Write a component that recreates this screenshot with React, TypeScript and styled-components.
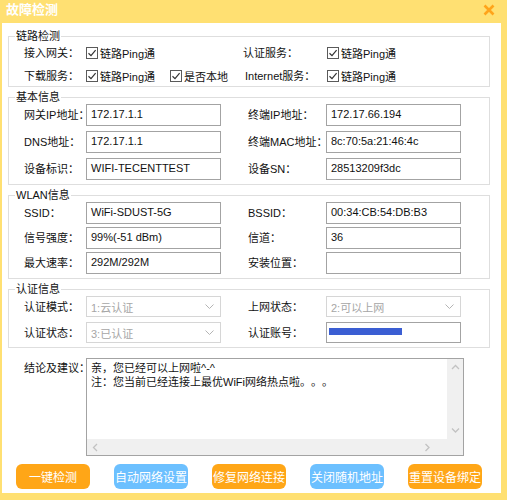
import { FC } from "react";
import styled, { createGlobalStyle } from "styled-components";

const GlobalStyle = createGlobalStyle`
  html, body {
    margin: 0;
    padding: 0;
    background: #ffe072;
  }
  body {
    font-family: "Liberation Sans", "Noto Sans CJK SC", sans-serif;
    font-size: 11px;
    color: #111;
    text-spacing-trim: space-all;
  }
`;

const CheckIcon: FC = () => (
  <svg width="12" height="12" viewBox="0 0 12 12">
    <rect x="0.5" y="0.5" width="11" height="11" fill="#fff" stroke="#5a5a5a" />
    <path d="M2.5 6.2 L5 8.6 L9.6 3.2" fill="none" stroke="#333" strokeWidth="1.2" />
  </svg>
);

const ChevronDown: FC = () => (
  <svg width="9" height="5" viewBox="0 0 9 5">
    <path d="M0.5 0.5 L4.5 4.5 L8.5 0.5" fill="none" stroke="#b4b4b4" strokeWidth="1" />
  </svg>
);

const Arrow: FC<{ dir: "up" | "down" | "left" | "right" }> = ({ dir }) => {
  const d = {
    up: "M1 5 L4.5 1.5 L8 5",
    down: "M1 1.5 L4.5 5 L8 1.5",
    left: "M5 1 L1.5 4.5 L5 8",
    right: "M1.5 1 L5 4.5 L1.5 8",
  }[dir];
  const vertical = dir === "up" || dir === "down";
  return (
    <svg
      width={vertical ? 9 : 7}
      height={vertical ? 7 : 9}
      viewBox={vertical ? "0 0 9 7" : "0 0 7 9"}
    >
      <path d={d} fill="none" stroke="#c2c2c2" strokeWidth="1.3" />
    </svg>
  );
};

type Pair = { label: string; value: string };

const basicInfo: Pair[][] = [
  [
    { label: "网关IP地址：", value: "172.17.1.1" },
    { label: "终端IP地址：", value: "172.17.66.194" },
  ],
  [
    { label: "DNS地址：", value: "172.17.1.1" },
    { label: "终端MAC地址：", value: "8c:70:5a:21:46:4c" },
  ],
  [
    { label: "设备标识：", value: "WIFI-TECENTTEST" },
    { label: "设备SN：", value: "28513209f3dc" },
  ],
];

const wlanInfo: Pair[][] = [
  [
    { label: "SSID：", value: "WiFi-SDUST-5G" },
    { label: "BSSID：", value: "00:34:CB:54:DB:B3" },
  ],
  [
    { label: "信号强度：", value: "99%(-51 dBm)" },
    { label: "信道：", value: "36" },
  ],
  [
    { label: "最大速率：", value: "292M/292M" },
    { label: "安装位置：", value: "" },
  ],
];

const buttons = [
  { text: "一键检测", tone: "orange" },
  { text: "自动网络设置", tone: "blue" },
  { text: "修复网络连接", tone: "orange" },
  { text: "关闭随机地址", tone: "blue" },
  { text: "重置设备绑定", tone: "orange" },
] as const;

const App: FC = () => (
  <>
    <GlobalStyle />
    <Window>
      <TitleBar>
        <Title>故障检测</Title>
        <CloseButton>
          <svg width="12" height="12" viewBox="0 0 12 12">
            <path d="M1.5 1.5 L10.5 10.5 M10.5 1.5 L1.5 10.5" stroke="#ffa41a" strokeWidth="2.6" />
          </svg>
        </CloseButton>
      </TitleBar>
      <Panel>
        <Group>
          <Legend>链路检测</Legend>
          <CheckGrid>
            <Label>接入网关：</Label>
            <Checks>
              <CheckItem>
                <CheckIcon />
                链路Ping通
              </CheckItem>
            </Checks>
            <Label>认证服务：</Label>
            <Checks>
              <CheckItem>
                <CheckIcon />
                链路Ping通
              </CheckItem>
            </Checks>
            <Label>下载服务：</Label>
            <Checks>
              <CheckItem>
                <CheckIcon />
                链路Ping通
              </CheckItem>
              <CheckItem>
                <CheckIcon />
                是否本地
              </CheckItem>
            </Checks>
            <Label $shift={2}>Internet服务：</Label>
            <Checks>
              <CheckItem>
                <CheckIcon />
                链路Ping通
              </CheckItem>
            </Checks>
          </CheckGrid>
        </Group>

        <Group>
          <Legend>基本信息</Legend>
          <InfoGrid $rowHeight={22} $rowGap={5}>
            {basicInfo.map((row, i) => (
              <InfoRow key={i} row={row} />
            ))}
          </InfoGrid>
        </Group>

        <Group>
          <Legend>WLAN信息</Legend>
          <InfoGrid $rowHeight={22} $rowGap={3}>
            {wlanInfo.map((row, i) => (
              <InfoRow key={i} row={row} />
            ))}
          </InfoGrid>
        </Group>

        <Group>
          <Legend>认证信息</Legend>
          <InfoGrid $rowHeight={21} $rowGap={5}>
            <Label>认证模式：</Label>
            <Select>
              1:云认证
              <ChevronDown />
            </Select>
            <span />
            <Label>上网状态：</Label>
            <Select>
              2:可以上网
              <ChevronDown />
            </Select>
            <Label>认证状态：</Label>
            <Select>
              3:已认证
              <ChevronDown />
            </Select>
            <span />
            <Label>认证账号：</Label>
            <Field>
              <Masked />
            </Field>
          </InfoGrid>
        </Group>

        <Conclusion>
          <MemoLabel>结论及建议：</MemoLabel>
          <MemoBox>
            <MemoText>
              亲，您已经可以上网啦^-^
              <br />
              注：您当前已经连接上最优WiFi网络热点啦。。。
            </MemoText>
            <VScroll>
              <Arrow dir="up" />
              <Arrow dir="down" />
            </VScroll>
            <HScroll>
              <Arrow dir="left" />
              <Arrow dir="right" />
            </HScroll>
            <Corner />
          </MemoBox>
        </Conclusion>

        <ButtonRow>
          {buttons.map((b) => (
            <ActionButton key={b.text} $tone={b.tone}>
              {b.text}
            </ActionButton>
          ))}
        </ButtonRow>
      </Panel>
    </Window>
  </>
);

const InfoRow: FC<{ row: Pair[] }> = ({ row }) => (
  <>
    <Label>{row[0].label}</Label>
    <Field>{row[0].value}</Field>
    <span />
    <Label>{row[1].label}</Label>
    <Field>{row[1].value}</Field>
  </>
);

export default App;

const Window = styled.div`
  width: 507px;
  height: 500px;
  background: #ffe072;
  display: flex;
  flex-direction: column;
`;

const TitleBar = styled.div`
  height: 23px;
  display: flex;
  justify-content: space-between;
  align-items: flex-start;
  padding: 2px 12px 0 6px;
  box-sizing: border-box;
`;

const Title = styled.div`
  color: #fff;
  font-size: 13px;
  font-weight: bold;
  line-height: 16px;
`;

const CloseButton = styled.div`
  padding-top: 2px;
  line-height: 0;
`;

const Panel = styled.div`
  background: #fff;
  margin: 0 6px 7px 2px;
  height: 470px;
  box-sizing: border-box;
  padding: 6px 11px 4px 6px;
  display: flex;
  flex-direction: column;
  gap: 3px;
`;

const Group = styled.fieldset`
  margin: 0;
  padding: 0 0 4px 6px;
  border: 1px solid #dedede;
  min-width: 0;
  &:first-child {
    padding-bottom: 0;
  }
`;

const Legend = styled.legend`
  padding: 0 1px;
  font-size: 11px;
  line-height: 14px;
  color: #111;
`;

const CheckGrid = styled.div`
  display: grid;
  grid-template-columns: 62px 157px 84px 1fr;
  grid-auto-rows: 20px;
  row-gap: 3px;
  align-items: center;
  padding-left: 9px;
`;

const Label = styled.span<{ $shift?: number }>`
  white-space: nowrap;
  line-height: 14px;
  padding-left: ${(p) => p.$shift ?? 0}px;
`;

const Checks = styled.div`
  display: flex;
  gap: 15px;
  align-items: center;
`;

const CheckItem = styled.span`
  display: inline-flex;
  align-items: center;
  gap: 2px;
  white-space: nowrap;
  svg {
    flex: none;
  }
`;

const InfoGrid = styled.div<{ $rowHeight: number; $rowGap: number }>`
  display: grid;
  grid-template-columns: 62px 135px 27px 78px 135px;
  grid-auto-rows: ${(p) => p.$rowHeight}px;
  row-gap: ${(p) => p.$rowGap}px;
  align-items: center;
  padding-left: 9px;
`;

const Field = styled.div`
  height: 100%;
  box-sizing: border-box;
  border: 1px solid #a3a3a3;
  padding: 3px 4px 0;
  line-height: 13px;
  white-space: nowrap;
  overflow: hidden;
`;

const Masked = styled.span`
  display: block;
  width: 73px;
  height: 7px;
  margin: 2px 0 0 -2px;
  background: #3b5ed3;
`;

const Select = styled.div`
  height: 100%;
  box-sizing: border-box;
  border: 1px solid #d6d6d6;
  padding: 0 6px 0 4px;
  color: #a6a6a6;
  display: flex;
  align-items: center;
  justify-content: space-between;
  white-space: nowrap;
`;

const Conclusion = styled.div`
  display: grid;
  grid-template-columns: 62px 378px;
  padding-left: 16px;
  margin-top: 7px;
`;

const MemoLabel = styled.span`
  padding-top: 3px;
  line-height: 14px;
  white-space: nowrap;
`;

const MemoBox = styled.div`
  height: 98px;
  box-sizing: border-box;
  border: 1px solid #a3a3a3;
  display: grid;
  grid-template-columns: 1fr 16px;
  grid-template-rows: 1fr 16px;
`;

const MemoText = styled.div`
  padding: 2px 4px;
  line-height: 14px;
  white-space: nowrap;
  overflow: hidden;
`;

const VScroll = styled.div`
  background: #f0f0f0;
  display: flex;
  flex-direction: column;
  justify-content: space-between;
  align-items: center;
  padding: 5px 0;
`;

const HScroll = styled.div`
  background: #f0f0f0;
  display: flex;
  justify-content: space-between;
  align-items: center;
  padding: 0 16px 0 5px;
`;

const Corner = styled.div`
  background: #f0f0f0;
`;

const ButtonRow = styled.div`
  display: flex;
  justify-content: space-between;
  padding: 0 8px 0 8px;
  margin-top: 5px;
`;

const ActionButton = styled.div<{ $tone: "orange" | "blue" }>`
  width: 74px;
  height: 25px;
  border-radius: 6px;
  background: ${(p) => (p.$tone === "orange" ? "#ffa617" : "#6cc0ff")};
  color: #fff;
  font-size: 12px;
  display: flex;
  align-items: center;
  justify-content: center;
  white-space: nowrap;
`;
